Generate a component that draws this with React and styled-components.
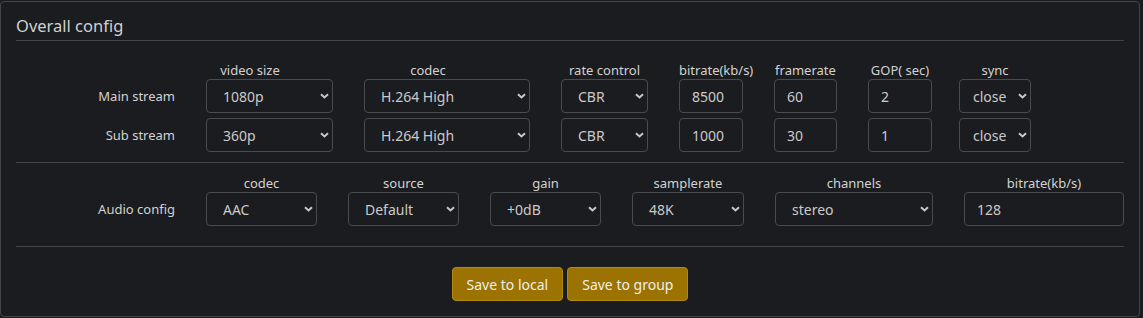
import React from 'react'
import styled, { createGlobalStyle } from 'styled-components'

const GlobalStyle = createGlobalStyle`
  body {
    margin: 0;
    background: #1b1c1f;
    font-family: "Noto Sans", "Open Sans", sans-serif;
    color: #d2d2d2;
  }
`;

const COLS = '159px 127px 166px 87px 64px 63px 64px 68px';
const AUDIO_COLS = '159px 111px 111px 111px 112px 158px 160px';

export default function App() {
  const streams = [
    { name: 'Main stream', size: '1080p', codec: 'H.264 High', rc: 'CBR', bitrate: '8500', fps: '60', gop: '2', sync: 'close' },
    { name: 'Sub stream', size: '360p', codec: 'H.264 High', rc: 'CBR', bitrate: '1000', fps: '30', gop: '1', sync: 'close' },
  ];

  return (
    <>
      <GlobalStyle />
      <Panel>
        <Title>Overall config</Title>
        <Divider />

        <Section $top={20}>
          <HeaderRow $cols={COLS}>
            <span />
            <Head $lean={39}>video size</Head>
            <Head $lean={38}>codec</Head>
            <Head>rate control</Head>
            <Head>bitrate(kb/s)</Head>
            <Head>framerate</Head>
            <Head>GOP( sec)</Head>
            <Head $pull={-4}>sync</Head>
          </HeaderRow>
          {streams.map((s) => (
            <ControlRow key={s.name} $cols={COLS}>
              <RowLabel>{s.name}</RowLabel>
              <Select value={s.size} options={['1080p', '720p', '540p', '480p', '360p']} />
              <Select value={s.codec} options={['H.264 High', 'H.264 Main', 'H.265']} />
              <Select value={s.rc} options={['CBR', 'VBR']} />
              <TextBox defaultValue={s.bitrate} />
              <TextBox defaultValue={s.fps} />
              <TextBox defaultValue={s.gop} />
              <Select value={s.sync} options={['close', 'open']} $pad={13} $pull={-4} />
            </ControlRow>
          ))}
        </Section>

        <Divider $top={10} />

        <Section $top={11}>
          <HeaderRow $cols={AUDIO_COLS}>
            <span />
            <Head>codec</Head>
            <Head>source</Head>
            <Head>gain</Head>
            <Head>samplerate</Head>
            <Head>channels</Head>
            <Head>bitrate(kb/s)</Head>
          </HeaderRow>
          <ControlRow $cols={AUDIO_COLS}>
            <RowLabel>Audio config</RowLabel>
            <Select value="AAC" options={['AAC', 'MP3', 'G711']} />
            <Select value="Default" options={['Default', 'HDMI', 'Line in']} />
            <Select value="+0dB" options={['+0dB', '+6dB', '+12dB']} />
            <Select value="48K" options={['48K', '44.1K', '32K']} />
            <Select value="stereo" options={['stereo', 'mono']} />
            <TextBox defaultValue="128" />
          </ControlRow>
        </Section>

        <Divider $top={20} />

        <Actions>
          <SaveButton>Save to local</SaveButton>
          <SaveButton>Save to group</SaveButton>
        </Actions>
      </Panel>
    </>
  )
}

function Select({ value, options, $pad, $pull }) {
  return (
    <Field $pull={$pull}>
      <SelectBox defaultValue={value} $pad={$pad}>
        {options.map((o) => <option key={o}>{o}</option>)}
      </SelectBox>
      <Chevron width="9" height="6" viewBox="0 0 9 6">
        <path d="M1 1.2 L4.5 4.5 L8 1.2" fill="none" stroke="#c8c8c8" strokeWidth="2" />
      </Chevron>
    </Field>
  )
}

const Panel = styled.div`
  box-sizing: border-box;
  margin-top: 1px;
  width: 1140px;
  height: 316px;
  border: 1px solid #444548;
  border-radius: 4px;
  padding: 0 15px;
  background: #1b1c1f;
`;

const Title = styled.div`
  padding-top: 12px;
  margin-bottom: 2px;
  font-size: 16.5px;
  line-height: 24px;
  color: #d0d0d0;
`;

const Divider = styled.div`
  height: 1px;
  margin-top: ${p => p.$top || 0}px;
  background: #424347;
`;

const Section = styled.div`
  display: flex;
  flex-direction: column;
  margin-top: ${p => p.$top}px;
`;

const HeaderRow = styled.div`
  display: grid;
  grid-template-columns: ${p => p.$cols};
  column-gap: 31px;
  height: 18px;
`;

const Head = styled.div`
  font-size: 13px;
  line-height: 18px;
  text-align: center;
  white-space: nowrap;
  padding-right: ${p => p.$lean || 0}px;
  margin-left: ${p => p.$pull || 0}px;
  color: #d2d2d2;
`;

const ControlRow = styled.div`
  display: grid;
  grid-template-columns: ${p => p.$cols};
  column-gap: 31px;
  height: 34px;
  align-items: center;
  & + & {
    margin-top: 5px;
  }
`;

const RowLabel = styled.div`
  font-size: 13px;
  text-align: right;
  color: #d2d2d2;
`;

const Field = styled.div`
  position: relative;
  height: 34px;
  margin-left: ${p => p.$pull || 0}px;
`;

const controlBase = `
  box-sizing: border-box;
  width: 100%;
  height: 34px;
  margin: 0;
  border: 1px solid #4a4b4f;
  border-radius: 4px;
  background: #1b1c1f;
  color: #cacaca;
  font-family: "Noto Sans", "Open Sans", sans-serif;
  font-size: 14px;
  outline: none;
`;

const SelectBox = styled.select`
  ${controlBase}
  appearance: none;
  padding: 0 20px 0 ${p => p.$pad || 16}px;
`;

const Chevron = styled.svg`
  position: absolute;
  right: 4px;
  top: 14px;
  pointer-events: none;
`;

const TextBox = styled.input`
  ${controlBase}
  padding: 0 12px;
`;

const Actions = styled.div`
  display: flex;
  justify-content: center;
  gap: 4px;
  margin-top: 20px;
`;

const SaveButton = styled.button`
  height: 34px;
  padding: 0 14px;
  border: 1px solid #b08a14;
  border-radius: 4px;
  background: #9c7300;
  color: #eeeeee;
  font-family: "Noto Sans", "Open Sans", sans-serif;
  font-size: 14px;
  cursor: pointer;
`;
